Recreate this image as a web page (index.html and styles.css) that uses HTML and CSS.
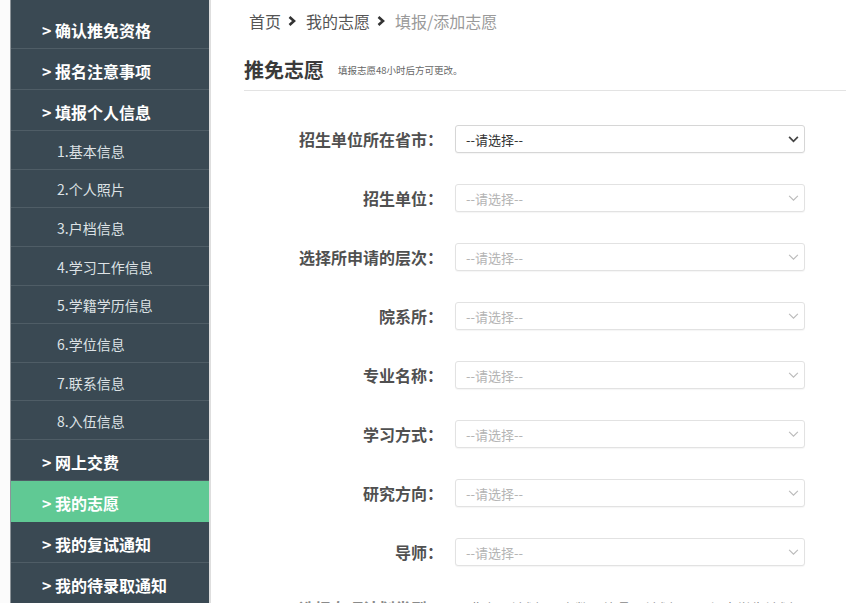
FILE: index.html
```html
<!DOCTYPE html>
<html lang="zh-CN">
<head>
<meta charset="utf-8">
<title>推免志愿</title>
<link rel="stylesheet" href="styles.css">
</head>
<body>
<div class="page">
  <aside class="sidebar">
    <ul class="menu">
      <li class="item main">&gt; 确认推免资格</li>
      <li class="item main">&gt; 报名注意事项</li>
      <li class="item main">&gt; 填报个人信息</li>
      <li class="item sub">1.基本信息</li>
      <li class="item sub">2.个人照片</li>
      <li class="item sub">3.户档信息</li>
      <li class="item sub">4.学习工作信息</li>
      <li class="item sub">5.学籍学历信息</li>
      <li class="item sub">6.学位信息</li>
      <li class="item sub">7.联系信息</li>
      <li class="item sub">8.入伍信息</li>
      <li class="item main">&gt; 网上交费</li>
      <li class="item main active">&gt; 我的志愿</li>
      <li class="item main">&gt; 我的复试通知</li>
      <li class="item main">&gt; 我的待录取通知</li>
    </ul>
  </aside>
  <main class="content">
    <nav class="crumbs">
      <span class="crumb">首页</span>
      <svg class="sep" viewBox="0 0 8 10" width="8" height="10"><polyline points="1.5,1 6,5 1.5,9" fill="none" stroke="#333" stroke-width="2.6"/></svg>
      <span class="crumb">我的志愿</span>
      <svg class="sep" viewBox="0 0 8 10" width="8" height="10"><polyline points="1.5,1 6,5 1.5,9" fill="none" stroke="#333" stroke-width="2.6"/></svg>
      <span class="crumb current">填报/添加志愿</span>
    </nav>
    <div class="title-bar">
      <h1 class="title">推免志愿</h1>
      <span class="note">填报志愿48小时后方可更改。</span>
    </div>
    <div class="form">
      <label class="label">招生单位所在省市：</label>
      <div class="select enabled"><span class="value">--请选择--</span><svg class="arrow" viewBox="0 0 12 8" width="11" height="7"><polyline points="1,1 6,6 11,1" fill="none" stroke="#444" stroke-width="2"/></svg></div>

      <label class="label">招生单位：</label>
      <div class="select"><span class="value">--请选择--</span><svg class="arrow" viewBox="0 0 12 8" width="11" height="7"><polyline points="1,1 6,6 11,1" fill="none" stroke="#bbb" stroke-width="1.3"/></svg></div>

      <label class="label">选择所申请的层次：</label>
      <div class="select"><span class="value">--请选择--</span><svg class="arrow" viewBox="0 0 12 8" width="11" height="7"><polyline points="1,1 6,6 11,1" fill="none" stroke="#bbb" stroke-width="1.3"/></svg></div>

      <label class="label">院系所：</label>
      <div class="select"><span class="value">--请选择--</span><svg class="arrow" viewBox="0 0 12 8" width="11" height="7"><polyline points="1,1 6,6 11,1" fill="none" stroke="#bbb" stroke-width="1.3"/></svg></div>

      <label class="label">专业名称：</label>
      <div class="select"><span class="value">--请选择--</span><svg class="arrow" viewBox="0 0 12 8" width="11" height="7"><polyline points="1,1 6,6 11,1" fill="none" stroke="#bbb" stroke-width="1.3"/></svg></div>

      <label class="label">学习方式：</label>
      <div class="select"><span class="value">--请选择--</span><svg class="arrow" viewBox="0 0 12 8" width="11" height="7"><polyline points="1,1 6,6 11,1" fill="none" stroke="#bbb" stroke-width="1.3"/></svg></div>

      <label class="label">研究方向：</label>
      <div class="select"><span class="value">--请选择--</span><svg class="arrow" viewBox="0 0 12 8" width="11" height="7"><polyline points="1,1 6,6 11,1" fill="none" stroke="#bbb" stroke-width="1.3"/></svg></div>

      <label class="label">导师：</label>
      <div class="select"><span class="value">--请选择--</span><svg class="arrow" viewBox="0 0 12 8" width="11" height="7"><polyline points="1,1 6,6 11,1" fill="none" stroke="#bbb" stroke-width="1.3"/></svg></div>

      <label class="label plain">选择专项计划类型：</label>
      <div class="radios">
        <span class="radio"><span class="dot"></span>非专项计划</span>
        <span class="radio"><span class="dot"></span>少数民族骨干计划</span>
        <span class="radio"><span class="dot"></span>退役大学生计划</span>
      </div>
    </div>
  </main>
</div>
</body>
</html>
```

FILE: styles.css
```css
html, body {
  margin: 0;
  padding: 0;
  height: 603px;
  overflow: hidden;
  background: #ffffff;
  font-family: "Noto Sans CJK SC", "Noto Sans", sans-serif;
}

.page {
  display: flex;
  height: 603px;
  padding-left: 10px;
  background: #fbfbfb;
}

.sidebar {
  width: 198px;
  flex: none;
  background: #3a4953;
  border-left: 1px solid #8d9499;
  border-right: 2px solid #dedede;
  padding-top: 8px;
}

.menu {
  list-style: none;
  margin: 0;
  padding: 0;
}

.item {
  box-sizing: border-box;
  display: flex;
  align-items: center;
  border-bottom: 1px solid #4f5d66;
  white-space: nowrap;
}

.item.main {
  height: 41px;
  padding: 3px 0 0 31px;
  font-size: 16px;
  font-weight: 700;
  color: #ffffff;
}

.item.sub {
  height: 38.625px;
  padding: 2px 0 0 46px;
  font-size: 14px;
  color: #dde2e5;
}

.item.active {
  background: #60c994;
  border-bottom-color: #60c994;
}

.content {
  flex: 1;
  background: #ffffff;
  padding: 11px 0 0 33px;
  min-width: 0;
}

.crumbs {
  display: flex;
  align-items: center;
  height: 20px;
  padding-left: 5px;
  font-size: 16px;
  line-height: 20px;
  color: #555555;
}

.crumbs .sep {
  margin: 0 10px 0 7px;
}

.crumbs .current {
  color: #9a9a9a;
}

.title-bar {
  display: flex;
  align-items: center;
  margin-top: 25px;
  padding-bottom: 6px;
  border-bottom: 1px solid #e3e3e3;
}

.title {
  margin: 0;
  font-size: 20px;
  line-height: 28px;
  font-weight: 700;
  color: #3a3a3a;
}

.note {
  margin-left: 14px;
  font-size: 9.5px;
  color: #666666;
  line-height: 28px;
}

.form {
  display: grid;
  grid-template-columns: 199px 350px;
  column-gap: 12px;
  row-gap: 31px;
  margin-top: 34px;
  align-items: center;
}

.label {
  text-align: right;
  font-size: 16px;
  font-weight: 700;
  color: #505050;
  line-height: 28px;
  white-space: nowrap;
}

.label.plain {
  line-height: 16px;
  align-self: start;
  margin-top: 3px;
  color: #8a8a8a;
}

.select {
  box-sizing: border-box;
  height: 28px;
  display: flex;
  align-items: center;
  justify-content: space-between;
  padding: 0 5px 0 10px;
  border: 1px solid #e2e2e2;
  border-radius: 3px;
  background: #ffffff;
  box-shadow: 0 1px 1px rgba(0, 0, 0, 0.04);
}

.select.enabled {
  border-color: #d6d6d6;
}

.select .value {
  font-size: 13px;
  color: #b4b4b4;
}

.select.enabled .value {
  color: #333333;
}

.radios {
  display: flex;
  align-self: start;
  margin-top: 3px;
  font-size: 14px;
  line-height: 16px;
  color: #888888;
  white-space: nowrap;
  gap: 8px;
}

.radio {
  display: flex;
  align-items: center;
}

.dot {
  box-sizing: border-box;
  width: 11px;
  height: 11px;
  border: 1px solid #999999;
  border-radius: 50%;
  margin-right: 3px;
}
```
